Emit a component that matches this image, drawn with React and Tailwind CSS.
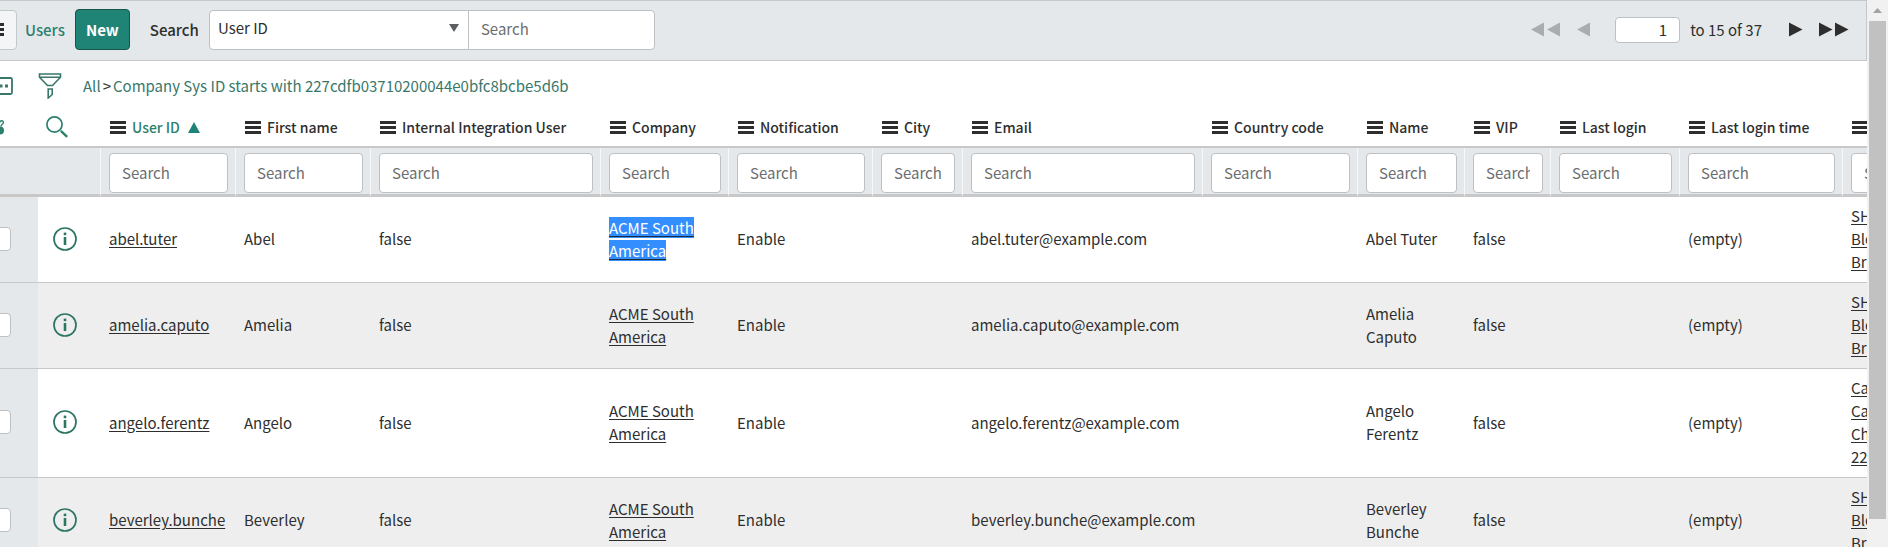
import { useState } from "react";

const columns = [
  { key: "userId", label: "User ID", width: "w-[135px]", sorted: true },
  { key: "firstName", label: "First name", width: "w-[135px]" },
  { key: "integration", label: "Internal Integration User", width: "w-[230px]" },
  { key: "company", label: "Company", width: "w-[128px]" },
  { key: "notification", label: "Notification", width: "w-[144px]" },
  { key: "city", label: "City", width: "w-[90px]" },
  { key: "email", label: "Email", width: "w-[240px]" },
  { key: "country", label: "Country code", width: "w-[155px]" },
  { key: "name", label: "Name", width: "w-[107px]" },
  { key: "vip", label: "VIP", width: "w-[86px]" },
  { key: "lastLogin", label: "Last login", width: "w-[129px]" },
  { key: "lastLoginTime", label: "Last login time", width: "w-[163px]" },
  { key: "location", label: "", width: "w-[160px]" },
];

const users = [
  { userId: "abel.tuter", firstName: "Abel", name: "Abel Tuter", location: ["SH", "Blo", "Br"], selected: true },
  { userId: "amelia.caputo", firstName: "Amelia", name: "Amelia Caputo", location: ["SH", "Blo", "Br"] },
  { userId: "angelo.ferentz", firstName: "Angelo", name: "Angelo Ferentz", location: ["Ca", "Ca", "Ch", "22"] },
  { userId: "beverley.bunche", firstName: "Beverley", name: "Beverley Bunche", location: ["SH", "Blo", "Br"] },
];

const linkKeys = ["userId", "company", "location"];

const cellValue = (user, key) => {
  const values = {
    integration: "false",
    company: "ACME South America",
    notification: "Enable",
    email: `${user.userId}@example.com`,
    vip: "false",
    lastLoginTime: "(empty)",
  };
  return user[key] ?? values[key] ?? "";
};

const MenuIcon = () => (
  <svg width="16" height="13" viewBox="0 0 16 13" className="shrink-0" fill="currentColor" aria-hidden="true">
    <path d="M0 0h16v3H0zM0 5h16v3H0zM0 10h16v3H0z" />
  </svg>
);

const FunnelIcon = () => (
  <svg width="24" height="26" viewBox="0 0 24 26" fill="none" stroke="currentColor" strokeWidth="1.6" aria-hidden="true">
    <path d="M1.5 1h21v3.2l-8 8.3h-5l-8-8.3zM1.5 4.2h21M10.2 16h4v5.5l-4 3.5z" />
  </svg>
);

const SearchIcon = () => (
  <svg width="22" height="22" viewBox="0 0 22 22" fill="none" stroke="currentColor" aria-hidden="true">
    <circle cx="8.5" cy="8.5" r="7.6" strokeWidth="1.7" />
    <path d="M14.8 14.8l6.4 6" strokeWidth="2.4" />
  </svg>
);

const ChatIcon = () => (
  <svg width="28" height="18" viewBox="0 0 28 18" fill="none" stroke="currentColor" strokeWidth="1.8" aria-hidden="true">
    <rect x="1" y="1" width="26" height="16" rx="1.5" />
    <path d="M9 9h3M14.5 9h3M20 9h3" strokeWidth="3" />
  </svg>
);

const GearIcon = () => (
  <svg width="20" height="16" viewBox="0 0 20 16" fill="currentColor" aria-hidden="true">
    <circle cx="16" cy="11.5" r="4" />
    <path d="M15.5 4c0-3 4-2.8 4-.6 0 1.6-2.2 1.6-2.6 4" fill="none" stroke="currentColor" strokeWidth="1.4" />
  </svg>
);

const InfoIcon = () => (
  <svg width="24" height="24" viewBox="0 0 24 24" fill="none" stroke="currentColor" aria-hidden="true">
    <circle cx="12" cy="12" r="11" strokeWidth="1.7" />
    <path d="M12 10v8" strokeWidth="2.6" />
    <path d="M12 5.6v2.6" strokeWidth="2.6" />
  </svg>
);

const Arrows = ({ count, back }) => (
  <svg width={count * 16 - 2} height="15" viewBox={`0 0 ${count * 16 - 2} 15`} fill="currentColor" aria-hidden="true">
    {[...Array(count).keys()].map((i) => (
      <path key={i} transform={`translate(${i * 16} 0)`} d={back ? "M13 .5v14L0 7.5z" : "M0 .5v14l13.5-7z"} />
    ))}
  </svg>
);

const Toolbar = ({ page, setPage }) => (
  <div className="flex h-[61px] items-center justify-between border-y border-r border-[#c5c8ca] bg-[#e4e8eb] pr-[17px] pb-0.5">
    <div className="flex items-center">
      <button
        type="button"
        aria-label="Menu"
        className="-ml-6 flex h-10 w-[41px] items-center justify-end rounded border border-[#c3c8cb] bg-[#f3f5f7] pr-3"
      >
        <MenuIcon />
      </button>
      <a href="#users" className="ml-2 text-[15px] font-medium text-[#2c806d]">Users</a>
      <button type="button" className="ml-2.5 h-[41px] w-[55px] rounded border border-[#17564a] bg-[#1f8476] font-bold text-white">
        New
      </button>
      <label htmlFor="search-field" className="ml-5 font-medium">Search</label>
      <div className="relative ml-2.5">
        <select
          id="search-field"
          className="block h-10 w-[260px] appearance-none rounded-l border border-[#bdc0c4] bg-white pb-1 pl-2"
        >
          <option>User ID</option>
        </select>
        <svg width="10" height="8" viewBox="0 0 10 8" fill="#5c5f61" className="pointer-events-none absolute right-2.5 top-3.5" aria-hidden="true">
          <path d="M0 0h10L5 8z" />
        </svg>
      </div>
      <input
        type="text"
        aria-label="Search text"
        placeholder="Search"
        className="-ml-px h-10 w-[187px] rounded-r border border-[#bdc0c4] bg-white px-3 pb-0.5 placeholder:text-[#6b6e70]"
      />
    </div>
    <div className="flex items-center">
      <button type="button" aria-label="First page" className="text-[#a9adb0]"><Arrows count={2} back /></button>
      <button type="button" aria-label="Previous page" className="ml-4 text-[#a9adb0]"><Arrows count={1} back /></button>
      <input
        type="text"
        aria-label="Current row"
        value={page}
        onChange={(e) => setPage(e.target.value)}
        className="ml-6 h-[26px] w-[65px] rounded border border-[#bdc0c4] bg-white px-3 text-right"
      />
      <span className="ml-2.5">to 15 of 37</span>
      <button type="button" aria-label="Next page" className="ml-[27px]"><Arrows count={1} /></button>
      <button type="button" aria-label="Last page" className="ml-4"><Arrows count={2} /></button>
    </div>
  </div>
);

const App = () => {
  const [page, setPage] = useState("1");

  return (
    <div className="flex h-screen overflow-hidden bg-white font-['Noto_Sans_CJK_SC',sans-serif] text-[15px] leading-[23px] text-[#2e2e2e]">
      <main className="min-w-0 flex-1 overflow-hidden">
        <Toolbar page={page} setPage={setPage} />

        <div className="flex h-[51px] items-center pb-0.5 text-[#3a776b]">
          <button type="button" aria-label="Activity stream" className="-ml-[15px]"><ChatIcon /></button>
          <button type="button" aria-label="Filter" className="ml-[25px]"><FunnelIcon /></button>
          <nav className="ml-[21px] flex gap-0.5">
            <a href="#all">All</a>
            <span className="text-[#2e2e2e]">&gt;</span>
            <a href="#filter">Company Sys ID starts with 227cdfb03710200044e0bfc8bcbe5d6b</a>
          </nav>
        </div>

        <table className="-ml-4 w-[2018px] table-fixed border-separate border-spacing-0">
          <thead>
            <tr className="h-9">
              <th className="w-[54px] border-b-2 border-[#c8c8c8] pb-1 text-[#2c806d]">
                <button type="button" aria-label="List settings" className="block"><GearIcon /></button>
              </th>
              <th className="w-[62px] border-b-2 border-[#c8c8c8] pb-1 pl-2 text-left text-[#2c806d]">
                <button type="button" aria-label="Toggle search row" className="block"><SearchIcon /></button>
              </th>
              {columns.map((col) => (
                <th key={col.key} className={`${col.width} border-b-2 border-[#c8c8c8] pb-1 pl-[10px] text-left text-sm font-medium`}>
                  <div className="flex items-center gap-1.5 whitespace-nowrap">
                    <MenuIcon />
                    <span className={col.sorted ? "text-[#2c806d]" : ""}>{col.label}</span>
                    {col.sorted && (
                      <svg width="12" height="11" viewBox="0 0 12 11" fill="#1f8476" className="ml-0.5" aria-hidden="true">
                        <path d="M6 0l6 11H0z" />
                      </svg>
                    )}
                  </div>
                </th>
              ))}
            </tr>
            <tr className="h-[49px] bg-[#e4e8eb]">
              <td colSpan={2} className="border-b-[3px] border-[#c8c8c8]" />
              {columns.map((col) => (
                <td key={col.key} className="border-b-[3px] border-l border-b-[#c8c8c8] border-l-[#f7f8f9] pt-[5px] pr-[7px] pb-px pl-2">
                  <input
                    type="text"
                    aria-label={`Search ${col.label}`}
                    placeholder="Search"
                    className="block h-10 w-full rounded border border-[#bdc0c4] bg-white px-3 pb-0.5 placeholder:text-[#6b6e70]"
                  />
                </td>
              ))}
            </tr>
          </thead>
          <tbody>
            {users.map((user) => (
              <tr key={user.userId} className="bg-white even:bg-[#eeeeee]">
                <td className="border-b border-[#c8c8c8] bg-[#e4e8eb] pb-0.5">
                  <input
                    type="checkbox"
                    aria-label={`Select ${user.userId}`}
                    className="ml-[3px] block size-6 appearance-none rounded border border-[#bdc0c4] bg-white"
                  />
                </td>
                <td className="border-b border-[#c8c8c8] pb-0.5 pl-[15px] text-[#2c7565]">
                  <button type="button" aria-label={`Preview ${user.userId}`} className="block"><InfoIcon /></button>
                </td>
                {columns.map((col) => {
                  const value = cellValue(user, col.key);
                  return (
                    <td key={col.key} className="border-b border-[#c8c8c8] pt-[7px] pr-2 pb-[9px] pl-[9px]">
                      {linkKeys.includes(col.key) ? (
                        <a
                          href={`#${user.userId}`}
                          className={`underline underline-offset-2 ${
                            user.selected && col.key === "company"
                              ? "bg-[#338fff] text-white decoration-[#1d2b3a]"
                              : ""
                          }`}
                        >
                          {Array.isArray(value)
                            ? value.map((line, i) => <span key={i} className="block underline">{line}</span>)
                            : value}
                        </a>
                      ) : (
                        value
                      )}
                    </td>
                  );
                })}
              </tr>
            ))}
          </tbody>
        </table>
      </main>

      {/* Scroll bar */}
      <div className="flex w-[21px] shrink-0 flex-col bg-[#f1f1f1] pr-0.5 pl-0.5">
        <div className="flex h-[21px] items-center justify-center">
          <svg width="9" height="5" viewBox="0 0 9 5" fill="#a3a3a3" aria-hidden="true">
            <path d="M4.5 0L9 5H0z" />
          </svg>
        </div>
        <div className="h-[91%] bg-[#c1c1c1]" />
      </div>
    </div>
  );
};

export default App;
